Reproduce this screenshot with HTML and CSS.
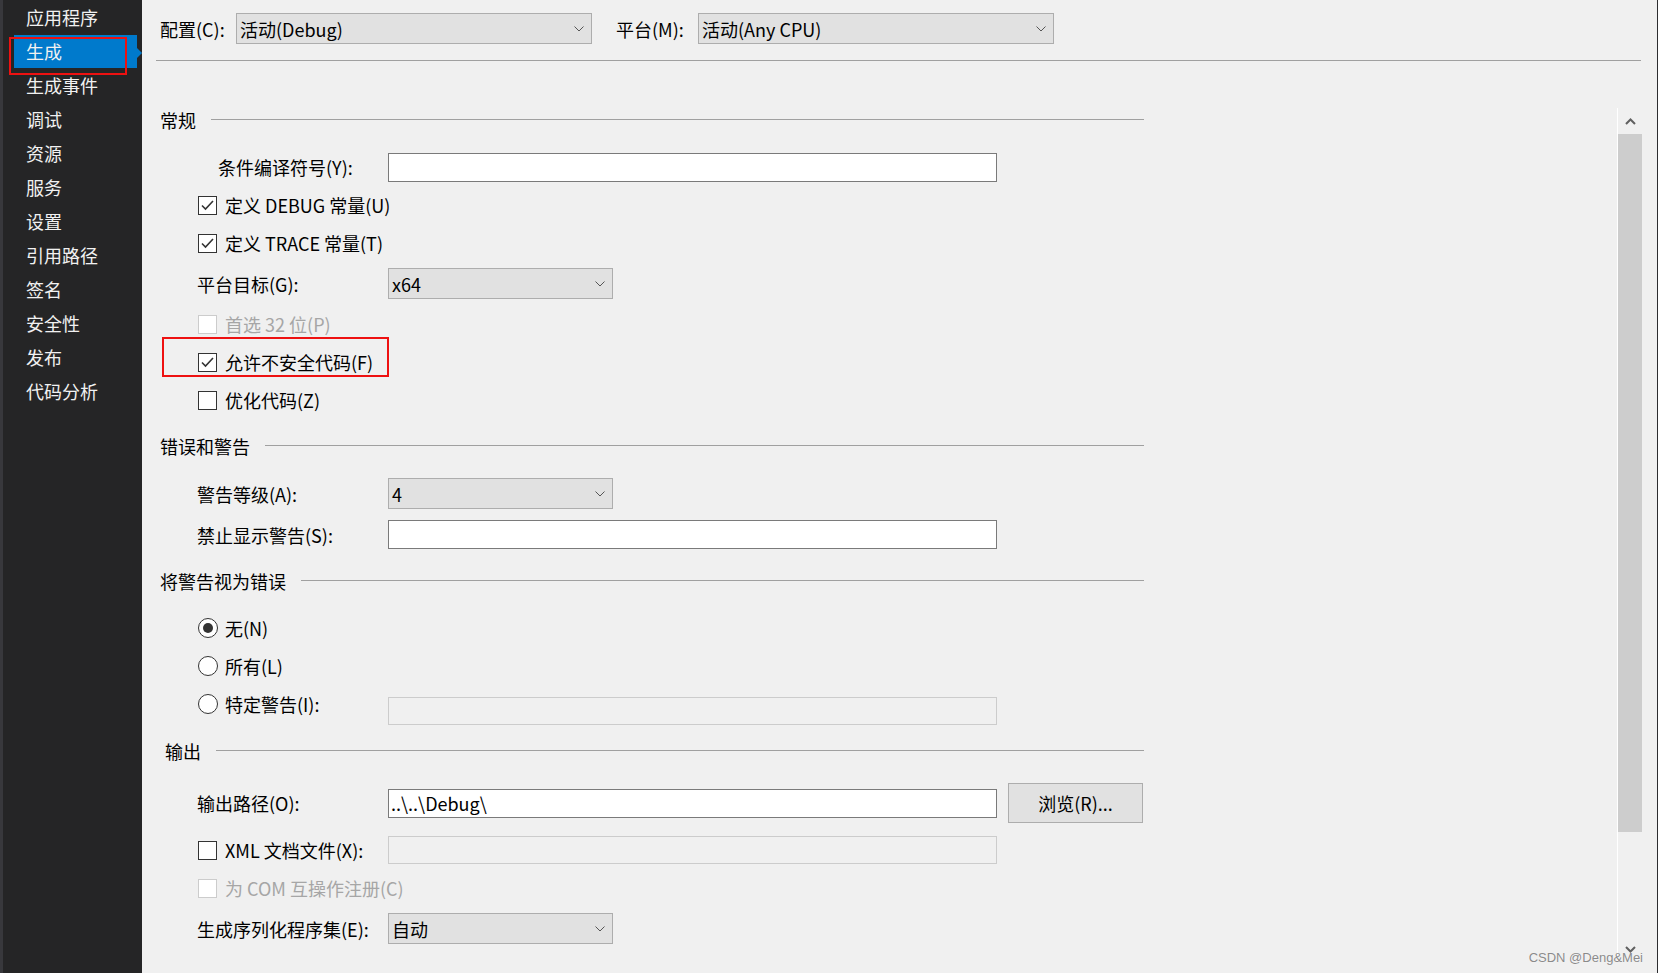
FILE: index.html
```html
<!DOCTYPE html>
<html lang="zh-CN">
<head>
  <meta charset="UTF-8">
  <title>生成</title>
  <link rel="stylesheet" href="styles.css">
</head>
<body>
  <div class="sidebar">
    <div class="nav-item">应用程序</div>
    <div class="nav-item active">生成<span class="arrow"></span><span class="mark-box"></span></div>
    <div class="nav-item">生成事件</div>
    <div class="nav-item">调试</div>
    <div class="nav-item">资源</div>
    <div class="nav-item">服务</div>
    <div class="nav-item">设置</div>
    <div class="nav-item">引用路径</div>
    <div class="nav-item">签名</div>
    <div class="nav-item">安全性</div>
    <div class="nav-item">发布</div>
    <div class="nav-item">代码分析</div>
  </div>

  <div class="main">
    <div class="toolbar">
      <span class="tb-label">配置(C):</span>
      <div class="combo big">活动(Debug)<svg class="chev" width="10" height="6" viewBox="0 0 10 6"><polyline points="0.5,0.5 5,5 9.5,0.5" fill="none" stroke="#555" stroke-width="1"/></svg></div>
      <span class="tb-label second">平台(M):</span>
      <div class="combo big">活动(Any CPU)<svg class="chev" width="10" height="6" viewBox="0 0 10 6"><polyline points="0.5,0.5 5,5 9.5,0.5" fill="none" stroke="#555" stroke-width="1"/></svg></div>
    </div>
    <div class="separator"></div>

    <div class="content">
      <div class="form">
        <div class="group">
          <div class="group-title"><span>常规</span></div>
          <div class="rows">
            <div class="row">
              <span class="field indent">条件编译符号(Y):</span>
              <div class="textbox"></div>
            </div>
            <div class="row">
              <label class="check"><span class="box"><svg width="17" height="17" viewBox="0 0 17 17"><polyline points="3,8.5 6.5,12 14,4" fill="none" stroke="#333" stroke-width="1.6"/></svg></span>定义 DEBUG 常量(U)</label>
            </div>
            <div class="row">
              <label class="check"><span class="box"><svg width="17" height="17" viewBox="0 0 17 17"><polyline points="3,8.5 6.5,12 14,4" fill="none" stroke="#333" stroke-width="1.6"/></svg></span>定义 TRACE 常量(T)</label>
            </div>
            <div class="row tall spaced">
              <span class="field">平台目标(G):</span>
              <div class="combo">x64<svg class="chev" width="10" height="6" viewBox="0 0 10 6"><polyline points="0.5,0.5 5,5 9.5,0.5" fill="none" stroke="#555" stroke-width="1"/></svg></div>
            </div>
            <div class="row">
              <label class="check disabled"><span class="box"></span>首选 32 位(P)</label>
            </div>
            <div class="row highlight">
              <label class="check"><span class="box"><svg width="17" height="17" viewBox="0 0 17 17"><polyline points="3,8.5 6.5,12 14,4" fill="none" stroke="#333" stroke-width="1.6"/></svg></span>允许不安全代码(F)</label>
              <span class="mark-box"></span>
            </div>
            <div class="row">
              <label class="check"><span class="box"></span>优化代码(Z)</label>
            </div>
          </div>
        </div>

        <div class="group">
          <div class="group-title"><span>错误和警告</span></div>
          <div class="rows">
            <div class="row tall">
              <span class="field">警告等级(A):</span>
              <div class="combo">4<svg class="chev" width="10" height="6" viewBox="0 0 10 6"><polyline points="0.5,0.5 5,5 9.5,0.5" fill="none" stroke="#555" stroke-width="1"/></svg></div>
            </div>
            <div class="row tall push">
              <span class="field">禁止显示警告(S):</span>
              <div class="textbox"></div>
            </div>
          </div>
        </div>

        <div class="group">
          <div class="group-title"><span>将警告视为错误</span></div>
          <div class="rows">
            <div class="row">
              <label class="radio"><span class="circle on"></span>无(N)</label>
            </div>
            <div class="row">
              <label class="radio"><span class="circle"></span>所有(L)</label>
            </div>
            <div class="row">
              <label class="radio field"><span class="circle"></span>特定警告(I):</label>
              <div class="textbox disabled low"></div>
            </div>
          </div>
        </div>

        <div class="group last">
          <div class="group-title shifted"><span>输出</span></div>
          <div class="rows">
            <div class="row with-button">
              <span class="field">输出路径(O):</span>
              <div class="textbox">..\..\Debug\</div>
              <button class="browse">浏览(R)...</button>
            </div>
            <div class="row push4">
              <label class="check field"><span class="box"></span>XML 文档文件(X):</label>
              <div class="textbox disabled"></div>
            </div>
            <div class="row">
              <label class="check disabled"><span class="box"></span>为 COM 互操作注册(C)</label>
            </div>
            <div class="row tall push">
              <span class="field">生成序列化程序集(E):</span>
              <div class="combo">自动<svg class="chev" width="10" height="6" viewBox="0 0 10 6"><polyline points="0.5,0.5 5,5 9.5,0.5" fill="none" stroke="#555" stroke-width="1"/></svg></div>
            </div>
          </div>
        </div>
      </div>

      <div class="scrollbar">
        <div class="sb-btn"><svg width="11" height="7" viewBox="0 0 11 7"><polyline points="1,6 5.5,1.5 10,6" fill="none" stroke="#606060" stroke-width="2"/></svg></div>
        <div class="sb-thumb"></div>
        <div class="sb-track"></div>
        <div class="sb-btn"><svg width="11" height="7" viewBox="0 0 11 7"><polyline points="1,1 5.5,5.5 10,1" fill="none" stroke="#606060" stroke-width="2"/></svg></div>
      </div>
    </div>
  </div>

  <div class="watermark">CSDN @Deng&amp;Mei</div>
</body>
</html>
```

FILE: styles.css
```css
* {
  box-sizing: border-box;
}
body {
  margin: 0;
  width: 1658px;
  height: 973px;
  display: flex;
  position: relative;
  overflow: hidden;
  background-color: #f0f0f0;
  border-right: 1px solid #2d2d30;
  font-family: "Noto Sans CJK SC", "Noto Sans", sans-serif;
  font-size: 18px;
  color: #000;
}

/* left navigation */
.sidebar {
  width: 142px;
  flex: none;
  background-color: #252526;
  border-left: 3px solid #38383c;
  padding-top: 1px;
  color: #f1f1f1;
}
.nav-item {
  position: relative;
  height: 34px;
  line-height: 33px;
  width: 123px;
  margin-left: 11px;
  padding-left: 12px;
  white-space: nowrap;
}
.nav-item.active {
  background-color: #007acc;
  height: 33px;
  margin-bottom: 1px;
}
.nav-item .arrow {
  position: absolute;
  right: -5px;
  top: 13px;
  border-left: 5px solid #007acc;
  border-top: 5px solid transparent;
  border-bottom: 5px solid transparent;
}
.nav-item .mark-box {
  position: absolute;
  left: -5px;
  top: 2px;
  width: 118px;
  height: 38px;
  border: 2px solid #ee1111;
}

/* main panel */
.main {
  flex: 1;
  display: flex;
  flex-direction: column;
}
.toolbar {
  display: flex;
  align-items: center;
  height: 31px;
  margin-top: 13px;
  padding-left: 18px;
}
.tb-label {
  width: 76px;
  flex: none;
  white-space: nowrap;
}
.tb-label.second {
  width: 82px;
  margin-left: 24px;
}
.separator {
  height: 1px;
  margin: 16px 16px 0 14px;
  background-color: #a0a0a0;
}

.combo {
  display: flex;
  align-items: center;
  width: 225px;
  height: 31px;
  padding-left: 3px;
  background-color: #e1e1e1;
  border: 1px solid #adadad;
  white-space: nowrap;
}
.combo.big {
  width: 356px;
}
.combo .chev {
  margin-left: auto;
  margin-right: 7px;
}

.content {
  flex: 1;
  display: flex;
}
.form {
  width: 1002px;
  flex: none;
  padding: 44px 0 0 18px;
}
.group + .group {
  margin-top: 16px;
}
.group.last {
  margin-top: 17px;
}
.group-title {
  display: flex;
  align-items: center;
  gap: 15px;
  height: 30px;
}
.group-title::after {
  content: "";
  flex: 1;
  border-top: 1px solid #a0a0a0;
  margin-top: -1px;
}
.group-title.shifted {
  padding-left: 5px;
}

.rows {
  display: flex;
  flex-direction: column;
  gap: 8px;
  padding: 17px 0 0 37px;
}
.row {
  position: relative;
  display: flex;
  align-items: center;
  height: 30px;
  white-space: nowrap;
}
.row.tall {
  height: 31px;
}
.row.spaced {
  margin: 2px 0;
}
.row.push {
  margin-top: 2px;
}
.row.push4 {
  margin-top: 4px;
}
.row.with-button {
  height: 40px;
}
.field {
  width: 191px;
  flex: none;
}
.field.indent {
  padding-left: 21px;
}

.textbox {
  width: 609px;
  height: 29px;
  line-height: 27px;
  padding-left: 2px;
  background-color: #fff;
  border: 1px solid #7a7a7a;
}
.textbox.disabled {
  height: 28px;
  background-color: #f0f0f0;
  border-color: #cccccc;
}
.textbox.low {
  align-self: flex-start;
  margin-top: 8px;
}
.browse {
  width: 135px;
  height: 40px;
  margin-left: 11px;
  background-color: #e1e1e1;
  border: 1px solid #adadad;
  font-family: inherit;
  font-size: 18px;
  color: #000;
  padding: 0;
}

.check,
.radio {
  display: flex;
  align-items: center;
  gap: 8px;
  padding-left: 1px;
}
.check .box {
  width: 19px;
  height: 19px;
  flex: none;
  display: flex;
  align-items: center;
  justify-content: center;
  background-color: #fff;
  border: 1px solid #333;
}
.check.disabled {
  color: #a6a6a6;
}
.check.disabled .box {
  border-color: #cccccc;
}
.radio {
  gap: 7px;
}
.radio .circle {
  width: 20px;
  height: 20px;
  flex: none;
  display: flex;
  align-items: center;
  justify-content: center;
  border-radius: 50%;
  background-color: #fff;
  border: 1px solid #333;
}
.radio .circle.on::after {
  content: "";
  width: 10px;
  height: 10px;
  border-radius: 50%;
  background-color: #333;
}

.highlight .mark-box {
  position: absolute;
  left: -35px;
  top: -10px;
  width: 227px;
  height: 40px;
  border: 2px solid #ee1111;
}

/* scrollbar */
.scrollbar {
  width: 25px;
  height: 854px;
  margin: 47px 15px 0 auto;
  border-left: 1px solid #fff;
  display: flex;
  flex-direction: column;
}
.sb-btn {
  height: 26px;
  display: flex;
  align-items: center;
  justify-content: center;
}
.sb-thumb {
  height: 698px;
  background-color: #cdcdcd;
}
.sb-track {
  flex: 1;
}

.watermark {
  position: absolute;
  right: 14px;
  bottom: 8px;
  font-family: "Liberation Sans", Arial, sans-serif;
  font-size: 13px;
  color: #8a8a8a;
  text-shadow: 0 0 1px #fff;
}
```
